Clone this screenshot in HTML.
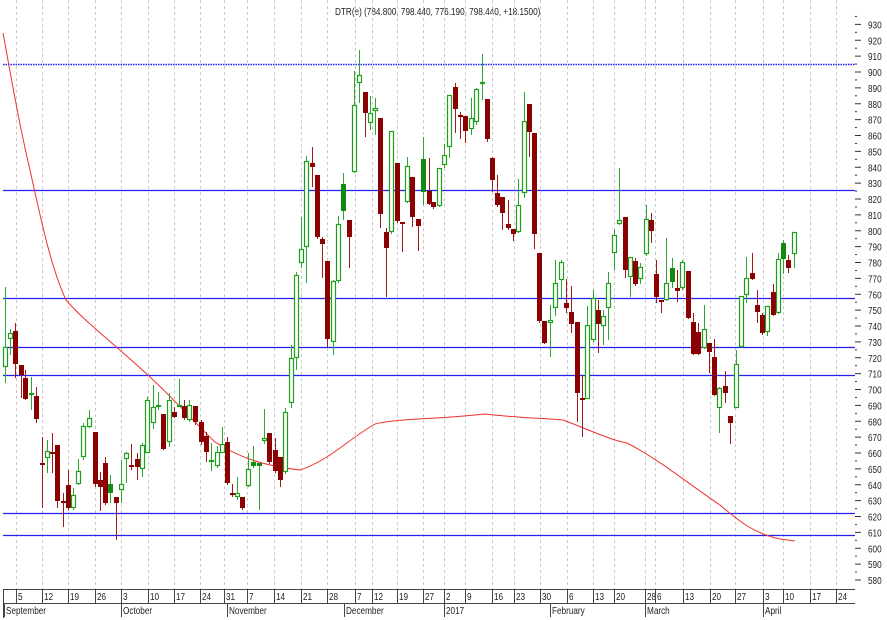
<!DOCTYPE html>
<html><head><meta charset="utf-8">
<style>
html,body{margin:0;padding:0;background:#fff;}
svg{display:block;}
text{font-family:"Liberation Sans",sans-serif;font-size:10.5px;fill:#222;}
</style></head>
<body>
<svg id="s" width="887" height="620" xmlns="http://www.w3.org/2000/svg">
</svg>
<script>
var s=document.getElementById('s');var NS='http://www.w3.org/2000/svg';
function el(t,a,txt){var e=document.createElementNS(NS,t);for(var k in a)e.setAttribute(k,a[k]);if(txt!=null)e.textContent=txt;s.appendChild(e);return e;}
function tx(x,y,str){el('text',{x:0,y:0,transform:'translate('+x+','+y+') scale(0.78,1)'},str);}
tx(335,15,'DTR(e) (784.800, 798.440, 776.190, 798.440, +18.1500)');
var grid=[16,42,68,95,121,148,174,200,224,247,274,301,327,355,372,397,423,444,465,492,514,540,567,593,614,645,655,683,710,735,763,783,810,836];
grid.forEach(function(x){el('line',{x1:x+.5,y1:0,x2:x+.5,y2:589,stroke:'#c8c8c8','stroke-dasharray':'3,3','stroke-width':1});});
el('line',{x1:3,y1:64.5,x2:855,y2:64.5,stroke:'#1a1aff','stroke-width':1.5,'stroke-dasharray':'1.5,1'});
[190.5,298.5,347.5,375.5,513.5,535.5].forEach(function(y){el('line',{x1:3,y1:y,x2:855,y2:y,stroke:'#2020f0','stroke-width':1.2});});
el('path',{d:'M3,33 C10,70 18,120 30,170 C42,225 52,270 66,300 C85,322 110,340 150,377 C175,400 190,418 215,442 C240,458 265,466 300,470 C330,460 350,438 375,424 C400,418 430,420 485,414 C520,418 540,418 563,420 C590,430 610,440 627,443 C660,460 690,485 720,505 C740,522 755,534 780,539 L795,541',fill:'none',stroke:'#f03030','stroke-width':1});
var C=[[5,367,347,287,383],[10,339,333,329,355],[15,331,364,323,378],[21,365,375,365,398],[25,378,399,370,400],[31,394,393,377,410],[36,396,419,387,423],[42,463,464,437,508],[47,458,451,440,473],[52,452,453,433,473],[57,445,501,445,508],[63,501,502,493,527],[68,485,508,470,510],[73,508,495,488,510],[78,484,471,459,485],[83,457,426,423,460],[89,427,418,410,428],[95,432,484,432,487],[100,480,487,472,511],[105,463,503,457,505],[110,493,484,475,503,1],[116,497,503,497,540],[121,490,484,460,503],[126,459,453,452,483],[131,465,467,444,470],[137,459,467,453,480],[142,469,445,443,477],[147,453,400,397,453],[153,423,407,385,429],[158,406,405,392,410],[163,414,449,414,450],[169,442,400,393,447],[174,412,417,407,418],[179,406,405,379,407],[184,406,418,400,420],[189,420,405,400,422],[195,406,422,406,425],[201,422,442,420,445],[206,436,452,432,462],[211,462,460,443,471],[217,466,452,446,468],[222,453,444,427,453],[227,442,483,437,485],[232,493,495,484,497],[237,497,493,477,500],[242,497,508,497,510],[248,486,469,453,487],[253,466,462,446,468,1],[259,466,463,463,510,1],[264,441,438,409,444],[269,433,462,433,464],[275,450,471,438,473],[280,457,480,457,487],[285,472,412,408,474],[291,403,358,345,408],[296,358,275,272,370],[301,263,249,217,268],[306,247,161,156,283],[312,163,167,147,187],[317,175,237,175,239],[322,239,244,237,278],[327,261,339,261,347],[333,342,281,280,355],[338,281,224,216,283],[343,211,184,173,220,1],[349,220,237,220,268],[354,172,105,71,173],[359,83,75,50,103],[365,92,113,92,137],[370,123,113,96,130],[375,111,108,98,135],[380,118,214,118,228],[386,232,248,228,297],[391,232,131,131,234],[397,163,221,163,223],[402,222,223,222,252],[407,202,166,157,203],[412,177,217,177,227],[418,219,226,219,251],[423,192,159,137,205,1],[429,191,204,158,205],[433,202,207,202,209],[439,206,168,168,207],[444,165,155,144,168],[449,147,95,95,158],[455,87,109,83,133],[460,115,117,112,139],[465,116,131,116,143],[471,129,118,98,135],[476,122,89,88,125],[482,83,82,54,100],[487,99,139,99,142],[492,158,180,157,192],[497,193,205,175,207],[502,197,213,197,230],[508,224,228,200,230],[513,229,234,229,241],[518,232,205,179,233],[524,193,121,92,198],[529,104,132,104,157],[534,133,234,133,249],[539,253,321,253,323],[544,321,343,321,344],[550,323,320,305,357],[555,308,283,260,316],[561,280,262,260,298],[566,303,308,279,313],[571,312,324,286,333],[577,322,393,322,422],[582,398,399,376,437],[587,399,325,306,399],[593,340,298,290,342],[598,310,324,300,353],[603,326,316,310,345],[608,308,283,272,340],[614,253,235,229,270],[619,224,220,168,225],[625,217,270,217,278],[630,277,257,257,297],[635,261,284,258,286],[640,279,267,263,284],[646,254,219,205,256],[651,220,231,213,243],[656,274,297,260,303],[661,300,302,300,313],[666,300,283,238,301],[672,282,268,258,288,1],[677,288,291,270,302],[682,288,262,260,290],[688,271,318,271,319],[693,322,354,313,355],[698,332,354,323,355],[704,348,329,305,349],[709,343,352,343,373],[714,357,395,339,396],[719,408,388,387,433],[725,386,393,371,403],[730,416,423,416,444],[736,408,364,350,408],[741,347,296,296,348],[746,295,278,257,303],[752,273,279,253,280],[757,305,312,290,323],[762,315,333,313,335],[767,332,306,306,336],[773,292,315,284,316],[778,313,259,253,314],[783,259,243,240,274,1],[788,260,268,255,273],[794,254,232,232,268]];
C.forEach(function(c){var x=c[0],o=c[1],cl=c[2],h=c[3],l=c[4];var up=cl<o;var col=up?'#1ea01e':'#8b0000';
el('line',{x1:x+.5,y1:h,x2:x+.5,y2:l,stroke:up?'#2aa82a':'#a01818','stroke-width':1});
var t=Math.min(o,cl),b=Math.max(o,cl);if(b-t<2){b=t+2;}
if(up&&!c[5])el('rect',{x:x-1.5,y:t+.5,width:4,height:b-t-1,fill:'#fff',stroke:col,'stroke-width':1.2});
else el('rect',{x:x-2,y:t,width:5,height:b-t,fill:up?'#108a10':col});});
for(var p=580;p<=935;p+=5){var y=72+(900-p)*1.5875;var major=p%10==0;
el('line',{x1:855,y1:y,x2:major?861:857,y2:y,stroke:'#333','stroke-width':1});
if(major&&p<=930)tx(868,y+4,p);}
el('line',{x1:3,y1:589.5,x2:855,y2:589.5,stroke:'#444'});
el('line',{x1:3,y1:603.5,x2:855,y2:603.5,stroke:'#444'});
el('line',{x1:3.5,y1:589,x2:3.5,y2:618,stroke:'#444'});
var dl=[[16,'5'],[42,'12'],[68,'19'],[95,'26'],[121,'3'],[148,'10'],[174,'17'],[200,'24'],[224,'31'],[247,'7'],[274,'14'],[301,'21'],[327,'28'],[355,'7'],[372,'12'],[397,'19'],[423,'27'],[444,'2'],[465,'9'],[492,'16'],[514,'23'],[540,'30'],[567,'6'],[593,'13'],[614,'20'],[645,'28'],[655,'6'],[683,'13'],[710,'20'],[735,'27'],[763,'3'],[783,'10'],[810,'17'],[836,'24']];
dl.forEach(function(d){el('line',{x1:d[0]+.5,y1:589,x2:d[0]+.5,y2:603,stroke:'#444'});tx(d[0]+2,600,d[1]);});
[[4,'September'],[121,'October'],[227,'November'],[344,'December'],[444,'2017'],[550,'February'],[645,'March'],[763,'April']].forEach(function(m){el('line',{x1:m[0]+.5,y1:603,x2:m[0]+.5,y2:617,stroke:'#444'});tx(m[0]+2,614,m[1]);});
</script>
</body></html>
